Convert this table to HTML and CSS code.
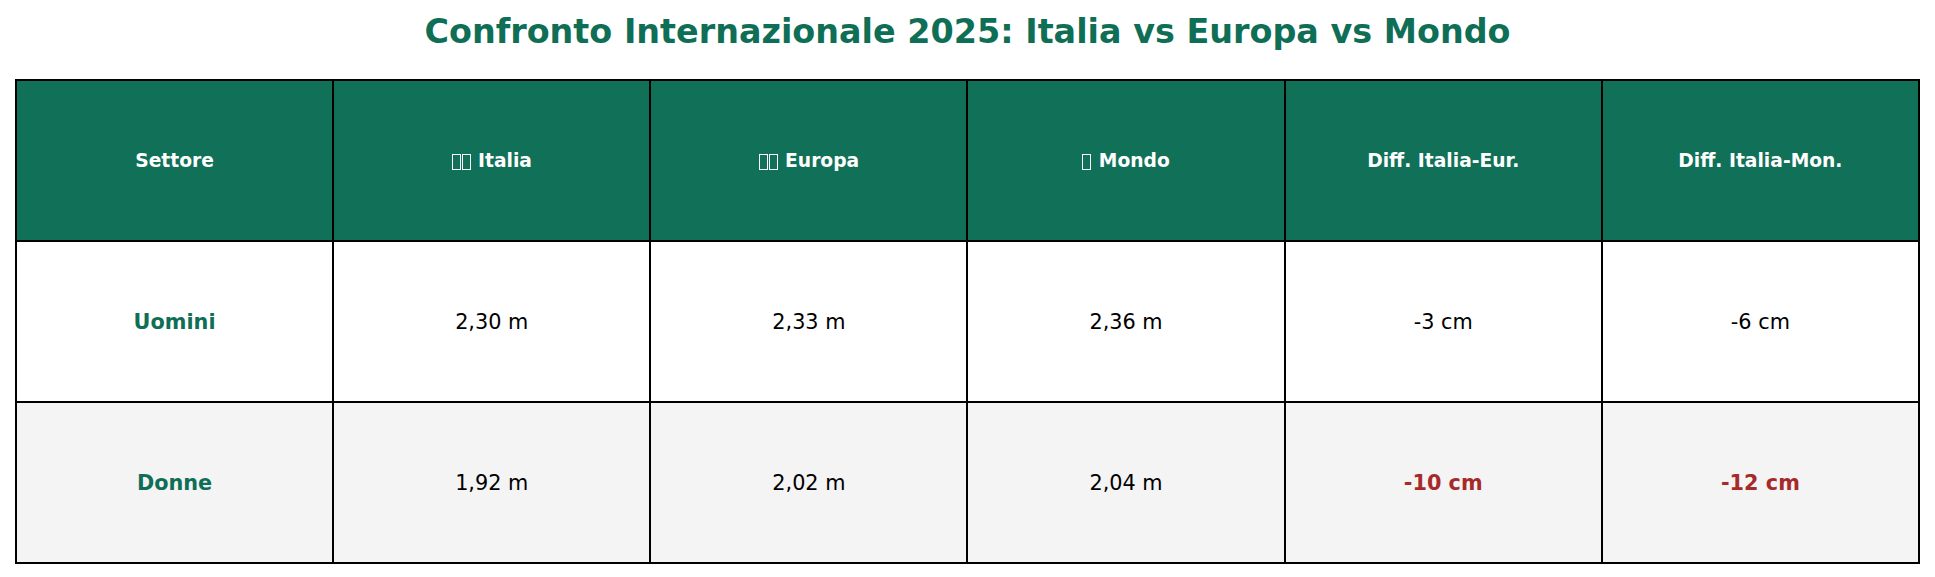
FILE: index.html
```html
<!DOCTYPE html>
<html lang="it">
<head>
<meta charset="utf-8">
<title>Confronto Internazionale 2025</title>
<link rel="stylesheet" href="styles.css">
</head>
<body>
<div class="page">
  <h1 class="title">Confronto Internazionale 2025: Italia vs Europa vs Mondo</h1>
  <table class="cmp">
    <thead>
      <tr>
        <th>Settore</th>
        <th><span class="tofu" aria-hidden="true"></span><span class="tofu" aria-hidden="true"></span> Italia</th>
        <th><span class="tofu" aria-hidden="true"></span><span class="tofu" aria-hidden="true"></span> Europa</th>
        <th><span class="tofu" aria-hidden="true"></span> Mondo</th>
        <th>Diff. Italia-Eur.</th>
        <th>Diff. Italia-Mon.</th>
      </tr>
    </thead>
    <tbody>
      <tr>
        <td class="sector">Uomini</td>
        <td>2,30 m</td>
        <td>2,33 m</td>
        <td>2,36 m</td>
        <td>-3 cm</td>
        <td>-6 cm</td>
      </tr>
      <tr class="alt">
        <td class="sector">Donne</td>
        <td>1,92 m</td>
        <td>2,02 m</td>
        <td>2,04 m</td>
        <td class="neg">-10 cm</td>
        <td class="neg">-12 cm</td>
      </tr>
    </tbody>
  </table>
</div>
</body>
</html>
```
FILE: styles.css
```css
html, body {
  margin: 0;
  padding: 0;
  background: #ffffff;
}

.page {
  width: 1935px;
  padding: 0 15px;
  box-sizing: border-box;
  font-family: "DejaVu Sans", sans-serif;
}

.title {
  margin: 0;
  height: 64px;
  line-height: 64px;
  text-align: center;
  font-size: 33.4px;
  font-weight: bold;
  color: #0f6e56;
}

.cmp {
  margin-top: 15px;
  width: 1905px;
  border-collapse: collapse;
  table-layout: fixed;
  border: 2px solid #000;
}

.cmp th,
.cmp td {
  border: 2px solid #000;
  text-align: center;
  vertical-align: middle;
  padding: 0;
}

.cmp tr {
  height: 161px;
}

.cmp th {
  background: #117058;
  color: #ffffff;
  font-size: 18.7px;
  font-weight: bold;
}

.tofu {
  display: inline-block;
  box-sizing: border-box;
  width: 9px;
  height: 16px;
  border: 1px solid #ffffff;
  margin-right: 1px;
  vertical-align: -2.5px;
}

.cmp td {
  font-size: 20.8px;
  color: #000000;
  background: #ffffff;
}

.cmp tr.alt td {
  background: #f4f4f4;
}

.cmp td.sector {
  color: #0f6e56;
  font-weight: bold;
}

.cmp td.neg {
  color: #a62a2a;
  font-weight: bold;
}
```
